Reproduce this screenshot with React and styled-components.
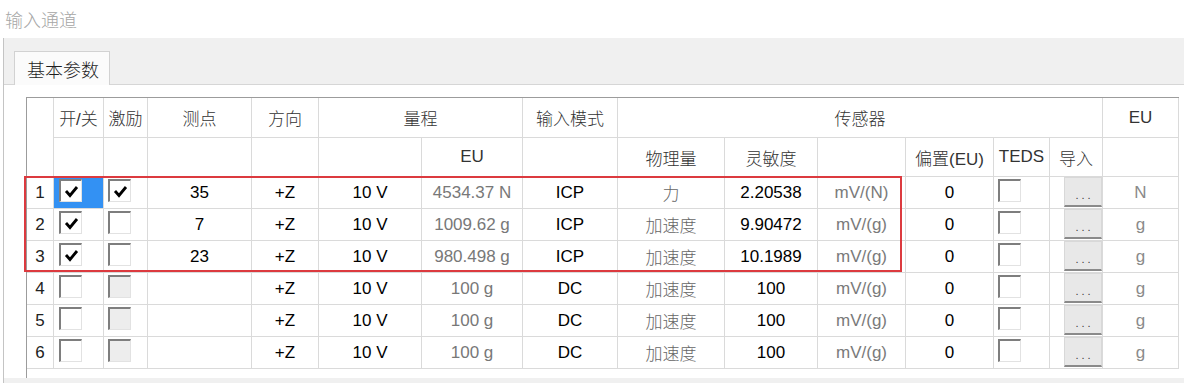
import React from 'react';
import styled, { createGlobalStyle } from 'styled-components';

const GlobalStyle = createGlobalStyle`
  html, body {
    margin: 0;
    padding: 0;
    background: #ffffff;
  }
  body {
    font-family: "Liberation Sans", "Noto Sans CJK SC", sans-serif;
  }
`;

const COLS = [27, 50, 44, 104, 67, 103, 101, 95, 107, 93, 88, 88, 56, 53, 76];

const Window = styled.div`
  width: 1188px;
  height: 383px;
  overflow: hidden;
  display: flex;
  flex-direction: column;
  background: #ffffff;
`;

const TitleBar = styled.div`
  height: 38px;
  display: flex;
  align-items: center;
  padding-left: 5px;
  font-size: 18px;
  font-weight: 300;
  color: #a6a6a6;
`;

const Panel = styled.div`
  flex: 1;
  display: flex;
  flex-direction: column;
  margin: 0 4px 0 3px;
  background: #f0f0f0;
  border-left: 1px solid #c4c4c4;
`;

const TabStrip = styled.div`
  height: 46px;
  display: flex;
  align-items: flex-end;
  padding-left: 10px;
  box-sizing: border-box;
`;

const Tab = styled.div`
  width: 96px;
  height: 34px;
  box-sizing: border-box;
  display: flex;
  align-items: center;
  padding-left: 12px;
  font-size: 18px;
  font-weight: 300;
  color: #1e1e1e;
  background: #fbfbfb;
  border: 1px solid #d2d2d2;
  border-bottom: none;
  margin-bottom: -1px;
  position: relative;
`;

const TabPage = styled.div`
  height: 294px;
  box-sizing: border-box;
  background: #ffffff;
  border-top: 1px solid #d6d6d6;
  padding: 12px 0 0 22px;
`;

const GridBox = styled.div`
  position: relative;
  width: 1153px;
  height: 281px;
  box-sizing: border-box;
  border-left: 1px solid #9c9c9c;
  border-top: 1px solid #9c9c9c;
  background: #ffffff;
`;

const Grid = styled.div`
  display: grid;
  grid-template-columns: ${COLS.map((w) => `${w}px`).join(' ')};
  grid-template-rows: 40px 39px repeat(6, 32px);
`;

const HeadCell = styled.div`
  grid-column: ${(p) => (p.$span ? `span ${p.$span}` : 'auto')};
  grid-row: ${(p) => (p.$rows ? `span ${p.$rows}` : 'auto')};
  box-sizing: border-box;
  border-right: 1px solid #dadada;
  border-bottom: 1px solid #dadada;
  display: flex;
  align-items: center;
  justify-content: center;
  font-size: 17px;
  font-weight: 300;
  color: #333333;
  white-space: nowrap;
`;

const Cell = styled.div`
  box-sizing: border-box;
  border-right: 1px solid #dadada;
  border-bottom: 1px solid #dadada;
  display: flex;
  align-items: center;
  justify-content: center;
  font-size: 17px;
  font-weight: ${(p) => (p.$light ? 300 : 400)};
  color: ${(p) => p.$color || '#000000'};
  background: ${(p) => p.$bg || 'transparent'};
  white-space: nowrap;
`;

const BoxCell = styled(Cell)`
  justify-content: flex-start;
  align-items: flex-start;
  padding: 2px 0 0 ${(p) => p.$pad || 5}px;
`;

const ButtonCell = styled(Cell)`
  justify-content: flex-end;
  align-items: flex-start;
`;

const Check = styled.span`
  width: 23px;
  height: 23px;
  box-sizing: border-box;
  display: flex;
  align-items: center;
  justify-content: center;
  background: ${(p) => (p.$disabled ? '#ededed' : '#ffffff')};
  border-top: 2px solid #7e7e7e;
  border-left: 2px solid #7e7e7e;
  border-right: 1px solid #e2e2e2;
  border-bottom: 1px solid #e2e2e2;
`;

const DotsButton = styled.div`
  width: 38px;
  height: 30px;
  box-sizing: border-box;
  display: flex;
  align-items: center;
  justify-content: center;
  padding: 6px 0 0 3px;
  background: #e8e8e8;
  border: 1px solid #d8d8d8;
  border-bottom: 2px solid #8a8a8a;
  font-size: 11px;
  letter-spacing: 3px;
  color: #3a3a3a;
`;

const Highlight = styled.div`
  position: absolute;
  left: -3px;
  top: 78px;
  width: 878px;
  height: 96px;
  box-sizing: border-box;
  border: 2px solid #dc3a3f;
  pointer-events: none;
`;

function CheckBox({ checked, disabled }) {
  return (
    <Check $disabled={disabled}>
      {checked ? (
        <svg width="17" height="17" viewBox="0 0 17 17">
          <polyline points="3,8 7,12.5 14,4" fill="none" stroke="#000" strokeWidth="2.8" />
        </svg>
      ) : null}
    </Check>
  );
}

const rows = [
  { n: 1, on: true, ex: true, pt: '35', eu: '4534.37 N', mode: 'ICP', phys: '力', sens: '2.20538', unit: 'mV/(N)', euUnit: 'N', selected: true },
  { n: 2, on: true, ex: false, pt: '7', eu: '1009.62 g', mode: 'ICP', phys: '加速度', sens: '9.90472', unit: 'mV/(g)', euUnit: 'g' },
  { n: 3, on: true, ex: false, pt: '23', eu: '980.498 g', mode: 'ICP', phys: '加速度', sens: '10.1989', unit: 'mV/(g)', euUnit: 'g' },
  { n: 4, on: false, ex: false, exOff: true, pt: '', eu: '100 g', mode: 'DC', phys: '加速度', sens: '100', unit: 'mV/(g)', euUnit: 'g' },
  { n: 5, on: false, ex: false, exOff: true, pt: '', eu: '100 g', mode: 'DC', phys: '加速度', sens: '100', unit: 'mV/(g)', euUnit: 'g' },
  { n: 6, on: false, ex: false, exOff: true, pt: '', eu: '100 g', mode: 'DC', phys: '加速度', sens: '100', unit: 'mV/(g)', euUnit: 'g' },
];

export default function App() {
  return (
    <Window>
      <GlobalStyle />
      <TitleBar>输入通道</TitleBar>
      <Panel>
        <TabStrip>
          <Tab>基本参数</Tab>
        </TabStrip>
        <TabPage>
          <GridBox>
            <Grid>
              <HeadCell $rows={2} />
              <HeadCell>开/关</HeadCell>
              <HeadCell>激励</HeadCell>
              <HeadCell>测点</HeadCell>
              <HeadCell>方向</HeadCell>
              <HeadCell $span={2}>量程</HeadCell>
              <HeadCell>输入模式</HeadCell>
              <HeadCell $span={6}>传感器</HeadCell>
              <HeadCell>EU</HeadCell>

              <HeadCell />
              <HeadCell />
              <HeadCell />
              <HeadCell />
              <HeadCell />
              <HeadCell>EU</HeadCell>
              <HeadCell />
              <HeadCell>物理量</HeadCell>
              <HeadCell>灵敏度</HeadCell>
              <HeadCell />
              <HeadCell>偏置(EU)</HeadCell>
              <HeadCell>TEDS</HeadCell>
              <HeadCell>导入</HeadCell>
              <HeadCell />

              {rows.map((r) => (
                <React.Fragment key={r.n}>
                  <Cell $color="#222">{r.n}</Cell>
                  <BoxCell $pad={5} $bg={r.selected ? '#3391f3' : undefined}>
                    <CheckBox checked={r.on} />
                  </BoxCell>
                  <BoxCell $pad={4}>
                    <CheckBox checked={r.ex} disabled={r.exOff} />
                  </BoxCell>
                  <Cell>{r.pt}</Cell>
                  <Cell>+Z</Cell>
                  <Cell>10 V</Cell>
                  <Cell $color="#787878">{r.eu}</Cell>
                  <Cell>{r.mode}</Cell>
                  <Cell $color="#666" $light>{r.phys}</Cell>
                  <Cell>{r.sens}</Cell>
                  <Cell $color="#7a7a7a">{r.unit}</Cell>
                  <Cell>0</Cell>
                  <BoxCell $pad={4}>
                    <CheckBox />
                  </BoxCell>
                  <ButtonCell>
                    <DotsButton>...</DotsButton>
                  </ButtonCell>
                  <Cell $color="#8a8a8a">{r.euUnit}</Cell>
                </React.Fragment>
              ))}
            </Grid>
            <Highlight />
          </GridBox>
        </TabPage>
      </Panel>
    </Window>
  );
}
